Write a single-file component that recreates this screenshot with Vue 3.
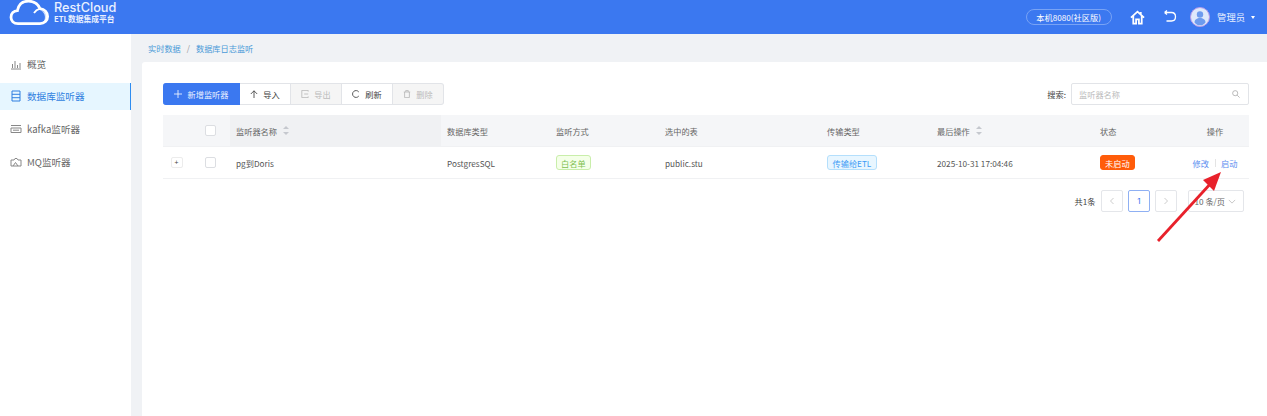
<template>
  <div class="page">
    <header class="topbar">
      <div class="logo">
        <svg class="logo-cloud" viewBox="0 0 40 26" width="40" height="26">
          <path d="M31 10C37 12.5 37.5 20 33 23.5L38.5 20.5L38.5 13.5Z" fill="#cfe0ff" />
          <path d="M9 23.6C4.5 23.6 2 20.5 2 17.2C2 13.5 4.8 10.8 8.4 10.6C9.5 4.5 13.5 1.2 19.5 1.2C25 1.2 29 4 31 8.6C35.6 9 38.6 12.4 38.6 16.4C38.6 20.6 35.4 23.6 31 23.6Z" fill="none" stroke="#fff" stroke-width="2.8" />
          <path d="M31 8.6C28.5 9.3 26.5 10.6 25 13" fill="none" stroke="#fff" stroke-width="1.8" />
        </svg>
        <div class="logo-text">
          <div class="logo-name">RestCloud</div>
          <div class="logo-sub">ETL数据集成平台</div>
        </div>
      </div>
      <div class="top-right">
        <span class="env">本机8080(社区版)</span>
        <svg class="top-icon home" viewBox="0 0 16 16" width="15" height="15">
          <path d="M1 8.2L8 1.8L15 8.2M3.5 6.5V14.5H6.5V10H9.5V14.5H12.5V6.5M11.5 2V4.6" fill="none" stroke="#fff" stroke-width="1.9" />
        </svg>
        <svg class="top-icon back" viewBox="0 0 14 14" width="14" height="14">
          <path d="M1.5 2.5H8.5C11 2.5 12.5 4.5 12.5 6.8C12.5 9.2 11 11 8.5 11H3.5M1.5 2.5L4 0.5M1.5 2.5L4 4.5" fill="none" stroke="#fff" stroke-width="1.3" />
        </svg>
        <span class="avatar">
          <svg viewBox="0 0 20 20" width="20" height="20">
            <circle cx="10" cy="10" r="9.5" fill="#dfe9fb" stroke="#b79be8" stroke-width="1" />
            <circle cx="10" cy="7.5" r="3.2" fill="#6d9bee" />
            <path d="M4.5 15.5C4.5 12.5 7 11 10 11C13 11 15.5 12.5 15.5 15.5C14 17.5 12 18.3 10 18.3C8 18.3 6 17.5 4.5 15.5Z" fill="#6d9bee" />
          </svg>
        </span>
        <span class="user">管理员</span>
        <span class="caret"></span>
      </div>
    </header>

    <div class="body">
      <aside class="sidebar">
        <div v-for="item in menu" :key="item.label" class="menu-item" :class="{ active: item.active }">
          <svg viewBox="0 0 12 12" width="12" height="12" class="menu-icon">
            <path :d="item.icon" fill="none" stroke="currentColor" stroke-width="1" />
          </svg>
          <span>{{ item.label }}</span>
        </div>
      </aside>

      <main class="main">
        <div class="crumbs">
          <span>实时数据</span>
          <span class="sep">/</span>
          <span>数据库日志监听</span>
        </div>

        <section class="card">
          <div class="toolbar">
            <div class="btn-group">
              <button class="btn primary">
                <svg viewBox="0 0 10 10" width="8" height="8"><path d="M5 0V10M0 5H10" stroke="#fff" stroke-width="1" /></svg>
                <span class="btn-text">新增监听器</span>
              </button>
              <button class="btn wide">
                <svg viewBox="0 0 10 10" width="8" height="8"><path d="M5 10V1M1 5L5 1L9 5" fill="none" stroke="#333" stroke-width="1" /></svg>
                <span class="btn-text">导入</span>
              </button>
              <button class="btn wide disabled">
                <svg viewBox="0 0 10 10" width="8" height="8"><path d="M9 2V0.5H1V9.5H9V8M4 5H9" fill="none" stroke="#b5b5b5" stroke-width="1" /></svg>
                <span class="btn-text">导出</span>
              </button>
              <button class="btn wide">
                <svg viewBox="0 0 10 10" width="8" height="8"><path d="M8.5 2.5A4.3 4.3 0 1 0 8.5 7.5" fill="none" stroke="#333" stroke-width="1" /></svg>
                <span class="btn-text">刷新</span>
              </button>
              <button class="btn wide disabled">
                <svg viewBox="0 0 10 10" width="8" height="8"><path d="M2 2.5V9.5H8V2.5M1 2.5H9M3.5 2.5V0.5H6.5V2.5" fill="none" stroke="#b5b5b5" stroke-width="1" /></svg>
                <span class="btn-text">删除</span>
              </button>
            </div>
            <div class="search">
              <span class="search-label">搜索:</span>
              <div class="search-box">
                <span>监听器名称</span>
                <svg viewBox="0 0 10 10" width="8" height="8"><circle cx="4" cy="4" r="3.2" fill="none" stroke="#aaa" stroke-width="1" /><path d="M6.5 6.5L9.5 9.5" stroke="#aaa" stroke-width="1" /></svg>
              </div>
            </div>
          </div>

          <div class="table">
            <div class="row head">
              <div class="cell"></div>
              <div class="cell check"><span class="box"></span></div>
              <div class="cell sorted">监听器名称<span class="sorter"></span></div>
              <div class="cell">数据库类型</div>
              <div class="cell">监听方式</div>
              <div class="cell">选中的表</div>
              <div class="cell">传输类型</div>
              <div class="cell">最后操作<span class="sorter"></span></div>
              <div class="cell">状态</div>
              <div class="cell center">操作</div>
            </div>
            <div v-for="row in rows" :key="row.name" class="row data">
              <div class="cell expand"><span class="plus">+</span></div>
              <div class="cell check"><span class="box"></span></div>
              <div class="cell">{{ row.name }}</div>
              <div class="cell">{{ row.dbType }}</div>
              <div class="cell"><span class="tag green">{{ row.mode }}</span></div>
              <div class="cell">{{ row.table }}</div>
              <div class="cell"><span class="tag blue">{{ row.transfer }}</span></div>
              <div class="cell">{{ row.time }}</div>
              <div class="cell"><span class="tag orange">{{ row.status }}</span></div>
              <div class="cell center links"><a>修改</a><i></i><a>启动</a></div>
            </div>
          </div>

          <div class="pager">
            <span class="total">共1条</span>
            <span class="page-btn muted">
              <svg viewBox="0 0 8 10" width="6" height="8"><path d="M6 1L2 5L6 9" fill="none" stroke="#bbb" stroke-width="1" /></svg>
            </span>
            <span class="page-btn current">1</span>
            <span class="page-btn muted">
              <svg viewBox="0 0 8 10" width="6" height="8"><path d="M2 1L6 5L2 9" fill="none" stroke="#bbb" stroke-width="1" /></svg>
            </span>
            <span class="page-size">
              10 条/页
              <svg viewBox="0 0 10 6" width="8" height="5"><path d="M1 1L5 5L9 1" fill="none" stroke="#bbb" stroke-width="1" /></svg>
            </span>
          </div>
        </section>
      </main>
    </div>

    <svg class="arrow" viewBox="0 0 80 80" width="80" height="80">
      <path d="M8 77L62 18" stroke="#e8212b" stroke-width="2.8" />
      <path d="M71 8L53 16L64 27Z" fill="#e8212b" />
    </svg>
  </div>
</template>

<script setup>
const menu = [
  { label: '概览', icon: 'M1 11H11M2.5 10V6M5 10V3M7.5 10V7M10 10V5' },
  { label: '数据库监听器', active: true, icon: 'M2 1H10V11H2ZM2 4.3H10M2 7.7H10' },
  { label: 'kafka监听器', icon: 'M1 2.5H11M1 5H11V9.5H1ZM3 7.2H9' },
  { label: 'MQ监听器', icon: 'M1 4H4L5 2.5H7L8 4H11V10H1ZM3 10L5.5 6.5L8 10' }
]

const rows = [
  {
    name: 'pg到Doris',
    dbType: 'PostgresSQL',
    mode: '白名单',
    table: 'public.stu',
    transfer: '传输给ETL',
    time: '2025-10-31 17:04:46',
    status: '未启动'
  }
]
</script>

<style>
html, body {
  margin: 0;
  background: #f0f2f5;
  overflow: hidden;
}
</style>

<style scoped>
.page {
  position: relative;
  width: 1267px;
  height: 416px;
  overflow: hidden;
  font-family: "Noto Sans CJK SC", "Noto Sans", sans-serif;
  font-size: 8.2px;
  color: #555;
}

.topbar {
  height: 34px;
  background: #3b78f0;
  display: flex;
  align-items: center;
  justify-content: space-between;
  padding: 0 12px 0 9px;
  color: #fff;
}

.logo {
  display: flex;
  align-items: flex-start;
  align-self: flex-start;
  gap: 5px;
}

.logo-name {
  font-family: "Inter", "Noto Sans", sans-serif;
  font-size: 12.7px;
  font-weight: 500;
  line-height: 13px;
  color: #e9f0ff;
  margin-top: 1px;
}

.logo-sub {
  font-size: 7.75px;
  line-height: 9px;
  font-weight: 700;
  color: #e9f0ff;
}

.top-right {
  display: flex;
  align-items: center;
}

.env {
  height: 16px;
  width: 86px;
  border: 1px solid #78a3f5;
  border-radius: 9px;
  display: flex;
  align-items: center;
  justify-content: center;
  font-size: 8.2px;
  margin-right: 18px;
  box-sizing: border-box;
}

.top-icon.back {
  margin-left: 18px;
}

.avatar {
  margin-left: 13px;
  display: flex;
}

.user {
  margin-left: 7.5px;
  font-size: 9.3px;
  color: #e9f0ff;
}

.caret {
  margin: 1px 0 0 6px;
  border-left: 2.5px solid transparent;
  border-right: 2.5px solid transparent;
  border-top: 3px solid #fff;
}

.body {
  display: flex;
  height: 382px;
}

.sidebar {
  width: 131px;
  background: #fff;
  padding-top: 16px;
  flex-shrink: 0;
}

.menu-item {
  height: 27px;
  margin-bottom: 5.8px;
  display: flex;
  align-items: center;
  gap: 5px;
  padding-left: 10px;
  font-size: 9.6px;
  color: #666;
  box-sizing: border-box;
}

.menu-item.active {
  background: #e6f6ff;
  color: #2f7fe0;
  border-right: 1.5px solid #2f8cf0;
}

.menu-icon {
  color: #888;
  flex-shrink: 0;
}

.active .menu-icon {
  color: #2f7fe0;
}

.main {
  flex: 1;
  padding: 0 0 0 11px;
  min-width: 0;
}

.crumbs {
  height: 28px;
  display: flex;
  align-items: center;
  gap: 6px;
  padding-left: 6px;
  color: #4a9ad8;
}

.crumbs .sep {
  color: #999;
}

.card {
  background: #fff;
  height: 354px;
  padding: 21px 18px 0 21px;
  border-radius: 3px 0 0 0;
}

.toolbar {
  display: flex;
  justify-content: space-between;
  align-items: center;
  height: 22px;
}

.btn-group {
  display: flex;
  height: 22px;
}

.btn {
  height: 22px;
  border: 1px solid #e2e4e8;
  border-left: none;
  background: #fff;
  padding: 0;
  display: flex;
  align-items: center;
  justify-content: center;
  gap: 5px;
  font: inherit;
  color: #444;
  box-sizing: border-box;
  width: 51px;
}

.btn.primary {
  width: 77px;
  background: #3b78f0;
  border-color: #3b78f0;
  color: #eaf1ff;
  border-radius: 3px 0 0 3px;
  gap: 6px;
}

.btn.disabled {
  background: #f5f5f5;
  color: #bbb;
}

.btn:last-child {
  width: 51px;
  border-radius: 0 3px 3px 0;
}

.search {
  display: flex;
  align-items: center;
  gap: 4px;
}

.search-label {
  color: #444;
  margin-right: 1px;
}

.search-box {
  width: 178px;
  height: 22px;
  border: 1px solid #e2e4e8;
  border-radius: 2px;
  box-sizing: border-box;
  padding: 0 8px 0 7px;
  display: flex;
  align-items: center;
  justify-content: space-between;
  color: #bbb;
}

.table {
  margin-top: 10px;
}

.row {
  display: grid;
  grid-template-columns: 35px 32px 211px 109px 109px 162px 110px 163px 67px 88px;
  height: 32px;
  border-bottom: 1.5px solid #f0f1f3;
  box-sizing: border-box;
}

.row.head {
  background: #f5f6f8;
  color: #666;
}

.cell {
  display: flex;
  align-items: center;
  padding-left: 6px;
  min-width: 0;
  white-space: nowrap;
}

.cell.center {
  justify-content: center;
  padding-left: 20px;
}

.cell.check {
  padding-left: 7px;
}

.cell.expand {
  padding-left: 7.5px;
}

.cell.sorted {
  background: #f0f1f3;
}

.box {
  width: 11px;
  height: 11px;
  border: 1px solid #dcdee2;
  border-radius: 2px;
  background: #fff;
  box-sizing: border-box;
}

.plus {
  width: 12px;
  height: 11px;
  border: 1px solid #ececec;
  border-radius: 2px;
  background: #fff;
  box-sizing: border-box;
  display: flex;
  align-items: center;
  justify-content: center;
  color: #444;
  font-size: 7px;
  line-height: 1;
}

.sorter {
  position: relative;
  display: inline-block;
  width: 6px;
  height: 9px;
  margin-left: 6px;
}

.sorter::before,
.sorter::after {
  content: "";
  position: absolute;
  left: 0;
  border-left: 3px solid transparent;
  border-right: 3px solid transparent;
}

.sorter::before {
  top: 0;
  border-bottom: 3.5px solid #c5c8ce;
}

.sorter::after {
  bottom: 0;
  border-top: 3.5px solid #c5c8ce;
}

.tag {
  display: inline-flex;
  align-items: center;
  height: 15px;
  padding: 0 4px;
  border: 1px solid;
  border-radius: 3px;
  box-sizing: border-box;
}

.tag.green {
  color: #7ec050;
  background: #f4ffe8;
  border-color: #c9eeaa;
}

.tag.blue {
  color: #3d9bf5;
  background: #e8f6ff;
  border-color: #b4dffc;
  padding: 0 4.5px;
}

.tag.orange {
  color: #fff;
  background: #ff5c0a;
  border-color: #ff5c0a;
}

.links a {
  color: #5b8def;
}

.links i {
  width: 1px;
  height: 8px;
  background: #e4e4e4;
  margin: 0 5.5px;
}

.pager {
  margin-top: 11px;
  display: flex;
  align-items: center;
  justify-content: flex-end;
  padding-right: 5px;
  color: #444;
}

.total {
  margin-right: 5.5px;
}

.page-btn {
  width: 22px;
  height: 22px;
  border: 1px solid #e4e6ea;
  border-radius: 2px;
  box-sizing: border-box;
  display: flex;
  align-items: center;
  justify-content: center;
  margin-right: 5px;
  font-family: "Inter", "Noto Sans", sans-serif;
}

.page-btn.current {
  border-color: #8fb0f3;
  color: #3b78f0;
}

.page-size {
  width: 56px;
  height: 22px;
  margin-left: 6px;
  border: 1px solid #e4e6ea;
  border-radius: 2px;
  box-sizing: border-box;
  display: flex;
  align-items: center;
  justify-content: flex-end;
  gap: 3px;
  padding-right: 7px;
  color: #666;
}

.arrow {
  position: absolute;
  left: 1150px;
  top: 164px;
}
</style>
